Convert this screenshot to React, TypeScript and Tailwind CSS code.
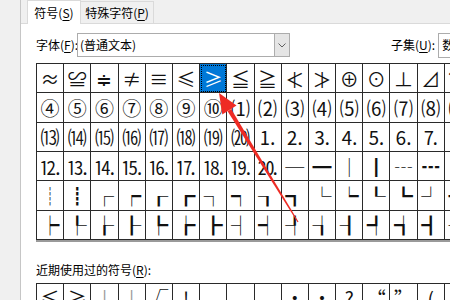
const font = "font-['Noto_Sans_CJK_SC','Noto_Sans',sans-serif]";

const rows: string[][] = [
  ["≈", "≌", "≑", "≠", "≡", "≤", "≥", "≦", "≧", "≮", "≯", "⊕", "⊙", "⊥", "⊿", "⌒"],
  ["④", "⑤", "⑥", "⑦", "⑧", "⑨", "⑩", "⑴", "⑵", "⑶", "⑷", "⑸", "⑹", "⑺", "⑻", "⑼"],
  ["⒀", "⒁", "⒂", "⒃", "⒄", "⒅", "⒆", "⒇", "⒈", "⒉", "⒊", "⒋", "⒌", "⒍", "⒎", "⒏"],
  ["⒓", "⒔", "⒕", "⒖", "⒗", "⒘", "⒙", "⒚", "⒛", "─", "━", "│", "┃", "┄", "┅", "┆"],
  ["┊", "┋", "┌", "┍", "┎", "┏", "┐", "┑", "┒", "┓", "└", "┕", "┖", "┗", "┘", "┙"],
  ["┝", "┞", "┟", "┠", "┡", "┢", "┣", "┤", "┥", "┦", "┧", "┨", "┩", "┪", "┫", "┬"],
];

const recent = ["≤", "≥", "|", "|", "√", "!", "", "", "", "·", "·", "?", "“", "”", "(", ""];

function Key({ k }: { k: string }) {
  return <span className="underline underline-offset-2">{k}</span>;
}

function SymbolCell({ ch, selected }: { ch: string; selected?: boolean }) {
  return (
    <div
      className={`flex items-center justify-center border-r border-b border-[#2a2a2a] text-[19px] leading-none ${
        selected
          ? "bg-[#0078d7] text-white outline outline-1 outline-dotted outline-black -outline-offset-2"
          : "text-[#111]"
      }`}
    >
      {ch}
    </div>
  );
}

function Arrow() {
  return (
    <svg className="absolute left-0 top-0 pointer-events-none" width="450" height="300" viewBox="0 0 450 300">
      <polygon points="219,93 236.5,105.6 222.3,114.6" fill="#ee2b24" />
      <polygon points="227.6,111.2 231.2,109 298.5,221.7 297.5,222.3" fill="#ee2b24" />
    </svg>
  );
}

export default function App() {
  return (
    <div className={`relative flex h-[300px] w-[450px] overflow-hidden bg-white text-[12px] text-black ${font}`}>
      <div className="w-[21px] shrink-0 border-r border-[#c6c6c6] bg-[#f0f0f0]" />

      <div className="flex min-w-0 flex-1 flex-col">
        <div className="flex h-[24px] shrink-0 items-end border-b border-[#dadada] bg-[#f0f0f0] pl-[6px]">
          <div className="-mb-px flex h-[24px] w-[54px] items-center justify-center border-x border-t border-[#dadada] bg-white">
            符号(<Key k="S" />)
          </div>
          <div className="flex h-[22px] w-[73px] items-center justify-center border-r border-t border-[#dadada] bg-[#f0f0f0]">
            特殊字符(<Key k="P" />)
          </div>
        </div>

        <div className="flex flex-col pl-[15px]">
          <div className="mt-[9px] flex h-[24px] items-center whitespace-nowrap">
            <span className="w-[41px] shrink-0">
              字体(<Key k="F" />):
            </span>
            <div className="flex h-[24px] w-[213px] shrink-0 items-center border border-[#acacac]">
              <span className="flex-1 pl-[2px]">(普通文本)</span>
              <div className="flex h-full w-[15px] items-center justify-center border-l border-[#adadad] bg-[#e5e5e5]">
                <svg width="8" height="5" viewBox="0 0 8 5">
                  <polyline points="0.5,0.5 4,4 7.5,0.5" fill="none" stroke="#606060" strokeWidth="1" />
                </svg>
              </div>
            </div>
            <span className="ml-[101px] shrink-0">
              子集(<Key k="U" />):
            </span>
            <div className="ml-[3px] flex h-[25px] w-[80px] shrink-0 items-center border border-[#acacac] pl-[3px]">
              数学运算符
            </div>
          </div>

          <div className="mt-[6px] grid w-max grid-cols-[repeat(16,27.2px)] grid-rows-[repeat(6,29.33px)] border-l border-t border-[#2a2a2a]">
            {rows.map((row, r) =>
              row.map((ch, c) => <SymbolCell key={`${r}-${c}`} ch={ch} selected={r === 0 && c === 6} />)
            )}
          </div>
          <div className="h-[2px] w-[436px] bg-[#9a9a9a]" />

          <div className="mt-[21px] leading-[14px]">
            近期使用过的符号(<Key k="R" />):
          </div>

          <div className="mt-[6px] grid w-max grid-cols-[repeat(16,27.2px)] grid-rows-[29px] border-l border-t border-[#2a2a2a]">
            {recent.map((ch, i) => (
              <div
                key={i}
                className={`flex items-center justify-center border-r border-b border-[#2a2a2a] text-[19px] leading-none ${
                  i === 2 || i === 3 ? "text-[#9a9a9a]" : "text-[#111]"
                }`}
              >
                {ch}
              </div>
            ))}
          </div>
        </div>
      </div>

      <Arrow />
    </div>
  );
}
